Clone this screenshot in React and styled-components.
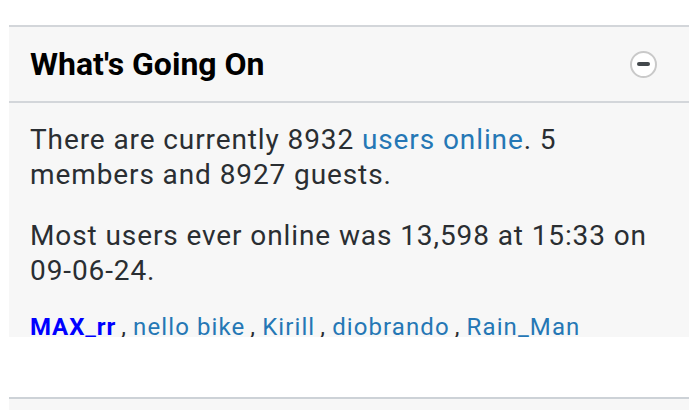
import styled, { createGlobalStyle } from 'styled-components';

const GlobalStyle = createGlobalStyle`
  body {
    margin: 0;
    background: #ffffff;
    font-family: Roboto, "Liberation Sans", sans-serif;
  }
`;

const Page = styled.div`
  padding: 25px 8px 0 9px;
`;

const Block = styled.section`
  background: #f7f7f7;
  border-top: 2px solid #d3d6da;
`;

const Header = styled.div`
  display: flex;
  align-items: center;
  justify-content: space-between;
  height: 74px;
  padding: 0 32px 0 21px;
  border-bottom: 2px solid #d3d6da;
`;

const Title = styled.h3`
  margin: 0;
  font-size: 32px;
  font-weight: 700;
  color: #000;
`;

const Toggle = styled.button`
  width: 27px;
  height: 27px;
  padding: 0;
  border: 2px solid #c9c9c9;
  border-radius: 50%;
  background: #fff;
  display: flex;
  align-items: center;
  justify-content: center;

  &::before {
    content: '';
    width: 13px;
    height: 4px;
    border-radius: 2px;
    background: #43484c;
  }
`;

const Body = styled.div`
  height: 234px;
  overflow: hidden;
  box-sizing: border-box;
  padding: 20px 21px 0;
  color: #2a2e32;
  font-size: 28px;
  line-height: 34.5px;
  letter-spacing: 0.9px;
`;

const Para = styled.p`
  margin: 0 0 27px;
`;

const Link = styled.a`
  color: #2577b5;
  text-decoration: none;
`;

const Names = styled.div`
  font-size: 24px;
  line-height: 24px;
  letter-spacing: 1.1px;
  white-space: nowrap;
`;

const Member = styled.a`
  color: ${(p) => (p.$staff ? '#0000ff' : '#2577b5')};
  font-weight: ${(p) => (p.$staff ? 700 : 400)};
  letter-spacing: ${(p) => (p.$staff ? '0.9px' : '1.1px')};
  text-decoration: none;
`;

const Sep = styled.span`
  margin: 0 6px 0 5px;
`;

const Spacer = styled.div`
  height: 60px;
  background: #fff;
`;

const NextBlock = styled.section`
  height: 20px;
  background: #f7f7f7;
  border-top: 2px solid #cdd2d7;
`;

const members = [
  { name: 'MAX_rr', staff: true },
  { name: 'nello bike' },
  { name: 'Kirill' },
  { name: 'diobrando' },
  { name: 'Rain_Man' },
];

export default function App() {
  return (
    <>
      <GlobalStyle />
      <Page>
        <Block>
          <Header>
            <Title>What's Going On</Title>
            <Toggle aria-label="Collapse" />
          </Header>
          <Body>
            <Para>
              There are currently 8932 <Link href="#">users online</Link>. 5
              members and 8927 guests.
            </Para>
            <Para>Most users ever online was 13,598 at 15:33 on 09-06-24.</Para>
            <Names>
              {members.map((m, i) => (
                <span key={m.name}>
                  {i > 0 && <Sep>,</Sep>}
                  <Member href="#" $staff={m.staff}>
                    {m.name}
                  </Member>
                </span>
              ))}
            </Names>
          </Body>
        </Block>
        <Spacer />
        <NextBlock />
      </Page>
    </>
  );
}
